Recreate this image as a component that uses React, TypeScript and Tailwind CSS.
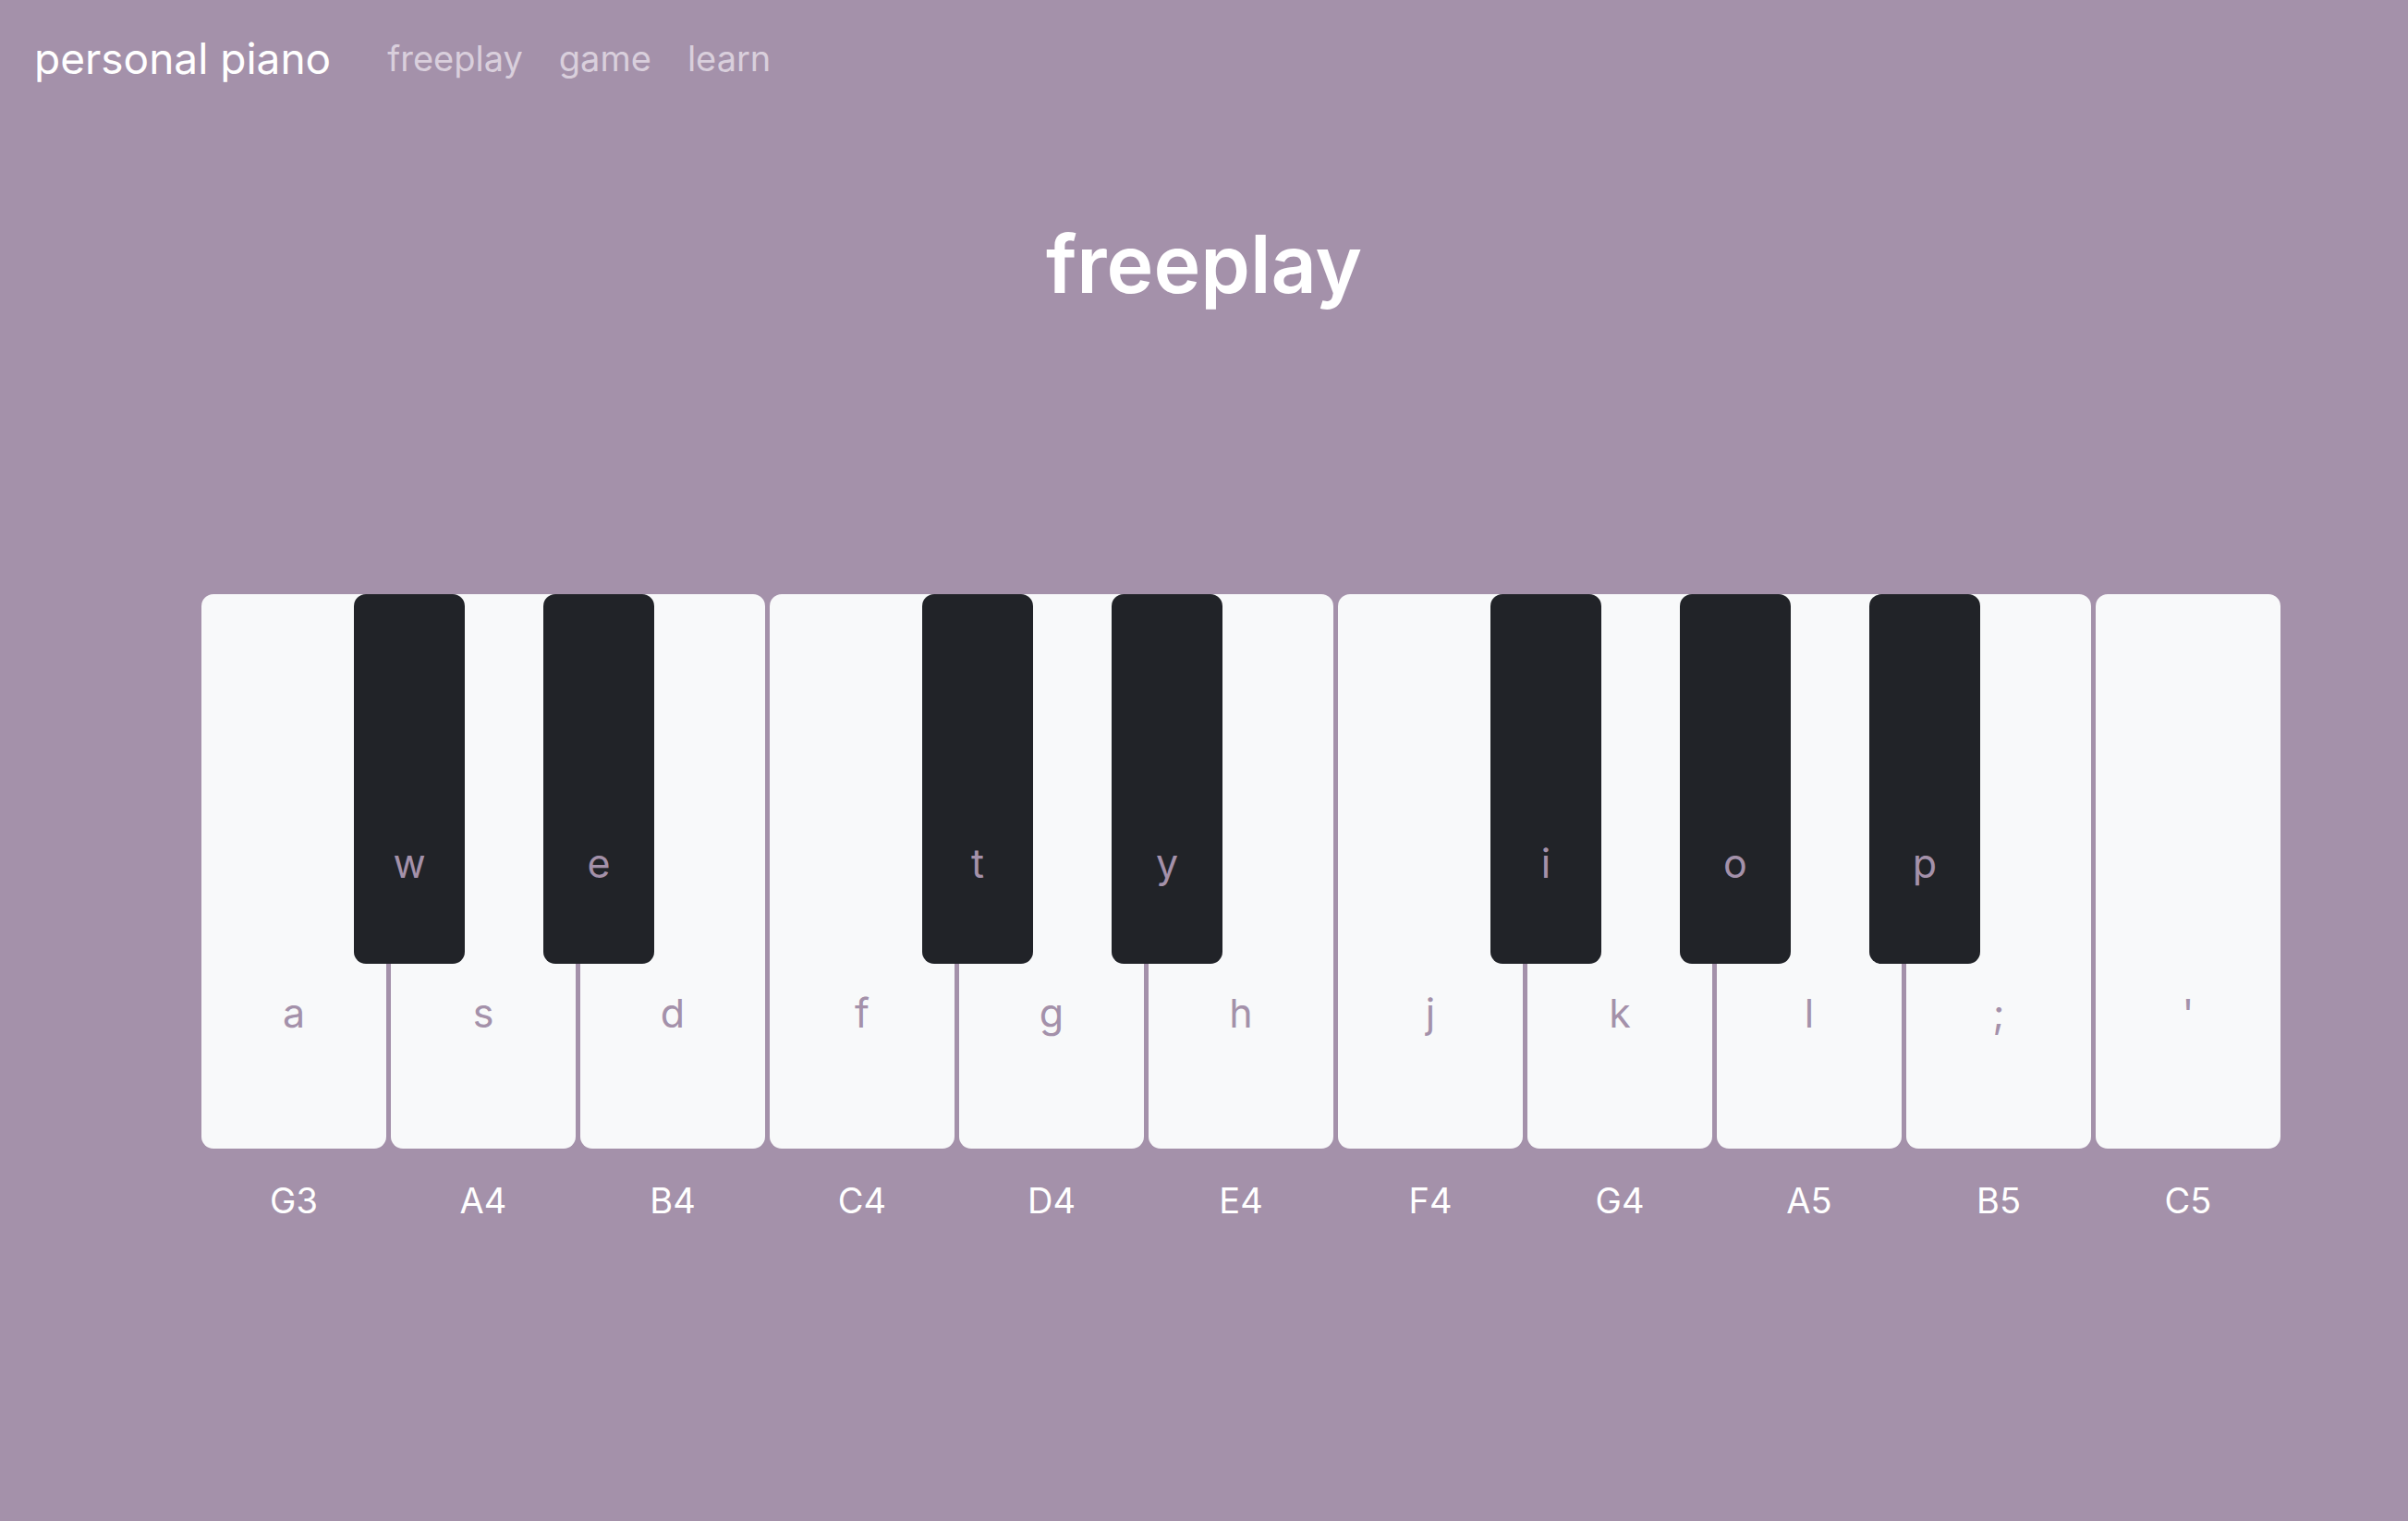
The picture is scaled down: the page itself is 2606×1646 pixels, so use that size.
import React from 'react'

type WhiteKey = { note: string; key: string; black?: string }

const keys: WhiteKey[] = [
  { note: 'G3', key: 'a' },
  { note: 'A4', key: 's', black: 'w' },
  { note: 'B4', key: 'd', black: 'e' },
  { note: 'C4', key: 'f' },
  { note: 'D4', key: 'g', black: 't' },
  { note: 'E4', key: 'h', black: 'y' },
  { note: 'F4', key: 'j' },
  { note: 'G4', key: 'k', black: 'i' },
  { note: 'A5', key: 'l', black: 'o' },
  { note: 'B5', key: ';', black: 'p' },
  { note: 'C5', key: "'" },
]

const App = () => {
  return (
    <div className="min-h-screen bg-[#a491aa] font-['Inter','Noto_Sans',sans-serif]">
      {/* Navbar */}
      <nav className="flex items-center h-[126px] px-[37px]">
        <a href="#" className="text-[46px] text-white leading-none mr-[61px]">
          personal piano
        </a>
        <div className="flex items-center gap-[39px] text-[38px] leading-none text-[#d9cfdc]">
          <a href="#">freeplay</a>
          <a href="#">game</a>
          <a href="#">learn</a>
        </div>
      </nav>

      <h1 className="mt-[117px] text-center text-[86px] leading-none font-semibold text-white">
        freeplay
      </h1>

      {/* Keyboard */}
      <div className="mt-[314px] flex justify-center gap-[5px] pl-[80px]">
        {keys.map((k) => (
          <div key={k.note} className="flex flex-col items-center">
            <div className="relative w-[200px] h-[600px] rounded-[13px] bg-[#f8f9fa] flex flex-col items-center justify-end pb-[125px]">
              {k.black && (
                <div className="absolute top-0 -left-[40px] z-10 w-[120px] h-[400px] rounded-[13px] bg-[#212328] flex flex-col items-center justify-end pb-[87px]">
                  <span className="text-[43px] leading-none text-[#a491aa]">{k.black}</span>
                </div>
              )}
              <span className="text-[43px] leading-none text-[#a491aa]">{k.key}</span>
            </div>
            <span className="mt-[37px] text-[38px] leading-none text-white">{k.note}</span>
          </div>
        ))}
      </div>
    </div>
  )
}

export default App
